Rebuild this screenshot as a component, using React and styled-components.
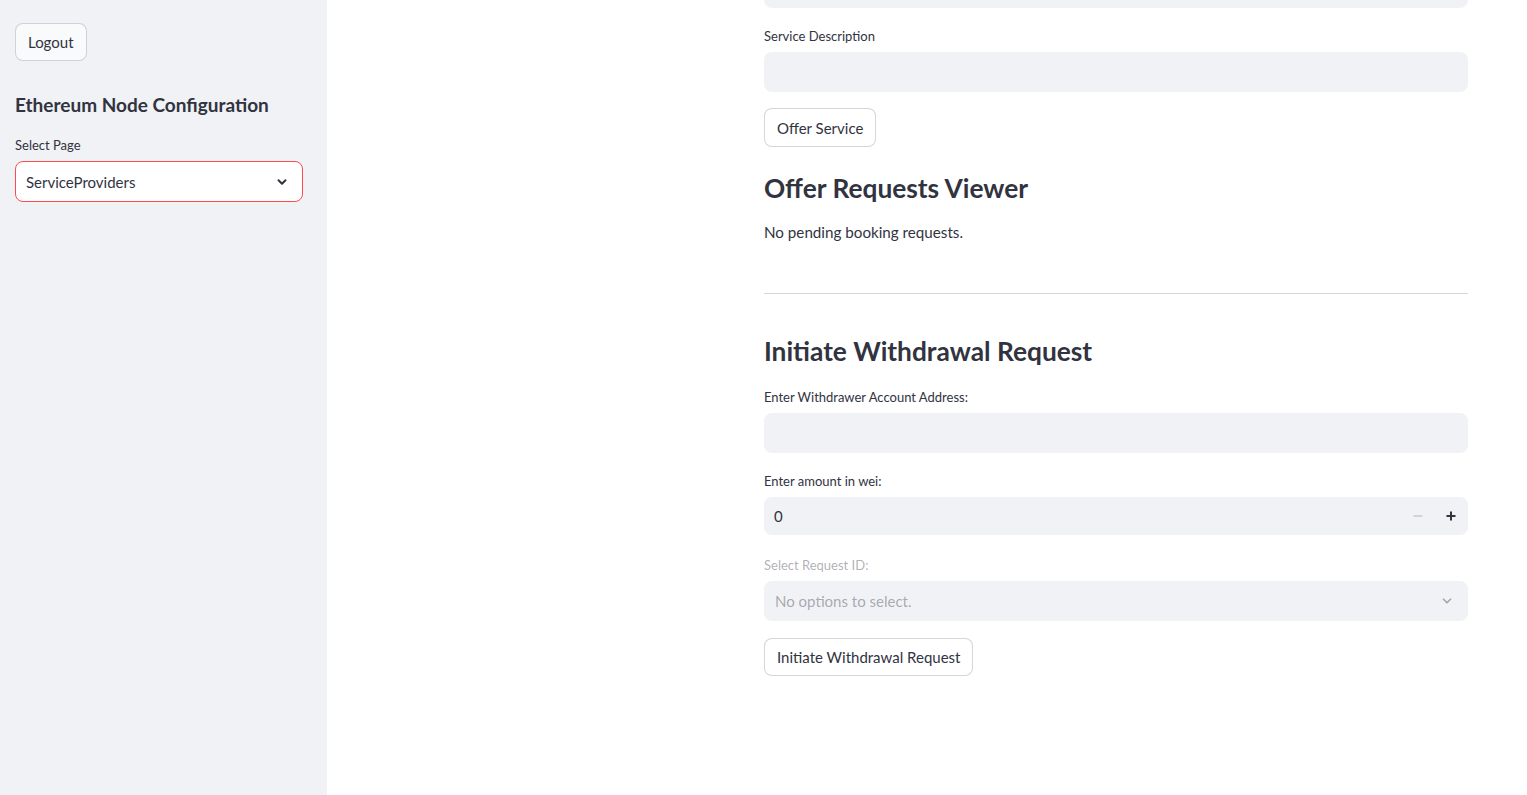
import React from "react";
import styled, { createGlobalStyle } from "styled-components";

const Global = createGlobalStyle`
  html, body {
    margin: 0;
    padding: 0;
    height: 100%;
  }
  body {
    font-family: Lato, "Noto Sans", sans-serif;
    color: #31333f;
    background: #ffffff;
  }
  #root {
    height: 100%;
  }
`;

const Shell = styled.div`
  display: flex;
  height: 795px;
  overflow: hidden;
`;

const Sidebar = styled.aside`
  width: 327px;
  flex-shrink: 0;
  background: #f0f2f6;
  padding: 23px 24px 0 15px;
  box-sizing: border-box;
  display: flex;
  flex-direction: column;
`;

const Main = styled.main`
  flex: 1;
  padding-left: 437px;
`;

const Content = styled.div`
  width: 704px;
  display: flex;
  flex-direction: column;
`;

const Button = styled.button`
  align-self: flex-start;
  font-family: inherit;
  font-size: 15px;
  color: #31333f;
  background: ${(p) => (p.$soft ? "#f9fafb" : "#ffffff")};
  border: 1px solid rgba(49, 51, 63, 0.2);
  border-radius: 8px;
  height: ${(p) => p.$h || 39}px;
  margin-top: ${(p) => p.$mt || 0}px;
  padding: 0 12px;
  cursor: pointer;
`;

const SideTitle = styled.h2`
  margin: 30px 0 0;
  font-size: 19px;
  font-weight: 700;
  line-height: 28px;
`;

const Label = styled.label`
  display: block;
  font-size: 13px;
  line-height: 18px;
  margin: ${(p) => p.$mt || 0}px 0 7px;
  color: ${(p) => (p.$disabled ? "rgba(49, 51, 63, 0.4)" : "#31333f")};
`;

const Field = styled.div`
  height: ${(p) => p.$h || 40}px;
  box-sizing: border-box;
  border-radius: 8px;
  background: #f0f2f6;
  display: flex;
  align-items: center;
  padding: 0 12px 0 10px;
  font-size: 15px;
`;

const CutField = styled.div`
  height: 8px;
  background: #f0f2f6;
  border-radius: 0 0 8px 8px;
`;

const SelectBox = styled.div`
  height: ${(p) => p.$h || 41}px;
  box-sizing: border-box;
  border-radius: 8px;
  background: ${(p) => (p.$focused ? "#ffffff" : "#f0f2f6")};
  border: 1px solid ${(p) => (p.$focused ? "#ff4b4b" : "transparent")};
  display: flex;
  align-items: center;
  justify-content: space-between;
  padding: 0 13px 0 10px;
  font-size: 15px;
  color: ${(p) => (p.$disabled ? "rgba(49, 51, 63, 0.4)" : "#31333f")};
`;

const Steppers = styled.div`
  display: flex;
  align-items: center;
  gap: 23px;
`;

const Heading = styled.h3`
  margin: ${(p) => p.$mt || 0}px 0 0;
  font-size: 26.3px;
  font-weight: 700;
  line-height: 40px;
`;

const Text = styled.p`
  margin: 12px 0 0;
  font-size: 15.2px;
  line-height: 24px;
`;

const Rule = styled.hr`
  margin: 49px 0 0;
  border: none;
  border-top: 1px solid rgba(49, 51, 63, 0.2);
`;

const Chevron = ({ color = "#31333f", w = 2.6 }) => (
  <svg width="14" height="14" viewBox="0 0 24 24" fill="none">
    <path d="M6 9l6 6 6-6" stroke={color} strokeWidth={w * 1.3} strokeLinecap="round" strokeLinejoin="round" />
  </svg>
);

const Minus = () => (
  <svg width="10" height="10" viewBox="0 0 10 10">
    <rect x="0.5" y="4.3" width="9" height="1.4" fill="#c5c7ce" />
  </svg>
);

const Plus = () => (
  <svg width="10" height="10" viewBox="0 0 10 10">
    <rect x="0.5" y="4" width="9" height="2" fill="#31333f" />
    <rect x="4" y="0.5" width="2" height="9" fill="#31333f" />
  </svg>
);

export default function App() {
  return (
    <>
      <Global />
      <Shell>
        <Sidebar>
          <Button $soft $h={38}>Logout</Button>
          <SideTitle>Ethereum Node Configuration</SideTitle>
          <Label $mt={17}>Select Page</Label>
          <SelectBox $focused>
            <span>ServiceProviders</span>
            <Chevron />
          </SelectBox>
        </Sidebar>
        <Main>
          <Content>
            <CutField />
            <Label $mt={19}>Service Description</Label>
            <Field />
            <Button $mt={16}>Offer Service</Button>
            <Heading $mt={21}>Offer Requests Viewer</Heading>
            <Text>No pending booking requests.</Text>
            <Rule />
            <Heading $mt={37}>Initiate Withdrawal Request</Heading>
            <Label $mt={17}>Enter Withdrawer Account Address:</Label>
            <Field />
            <Label $mt={19}>Enter amount in wei:</Label>
            <Field $h={38}>
              <span style={{ flex: 1 }}>0</span>
              <Steppers>
                <Minus />
                <Plus />
              </Steppers>
            </Field>
            <Label $mt={21} $disabled>Select Request ID:</Label>
            <SelectBox $disabled $h={40}>
              <span>No options to select.</span>
              <Chevron color="#a3a5ab" w={2.2} />
            </SelectBox>
            <Button $mt={17} $h={38}>Initiate Withdrawal Request</Button>
          </Content>
        </Main>
      </Shell>
    </>
  );
}
